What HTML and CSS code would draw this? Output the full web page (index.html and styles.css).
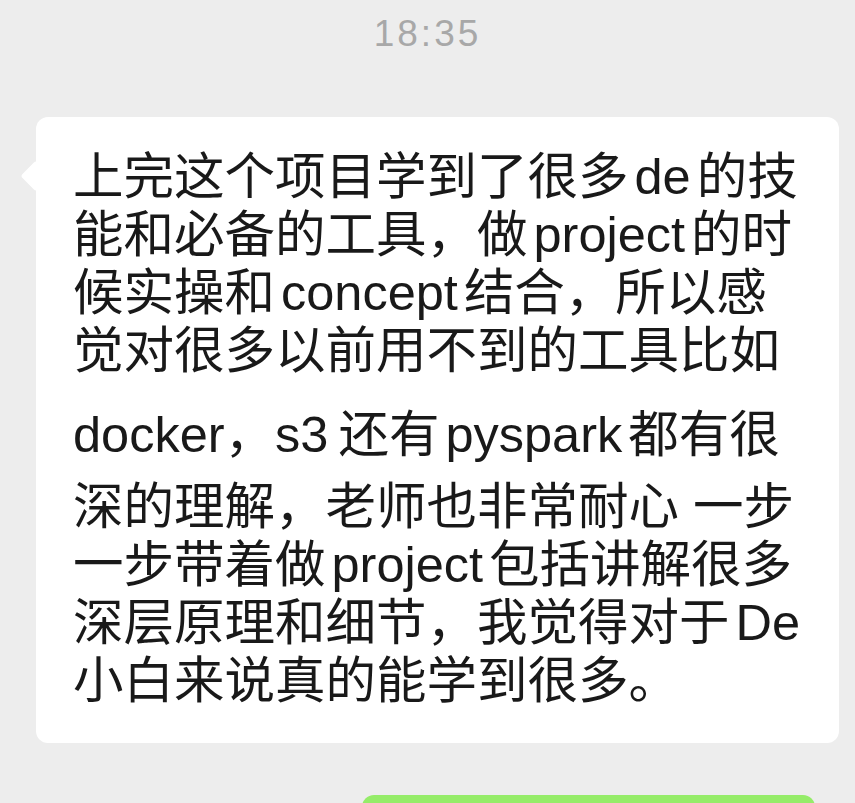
FILE: index.html
```html
<!DOCTYPE html>
<html lang="zh-CN">
<head>
<meta charset="utf-8">
<title>Chat</title>
<link rel="stylesheet" href="styles.css">
</head>
<body>
<div class="chat">
  <div class="time">18:35</div>
  <div class="msg-row">
    <div class="bubble">
      <div class="line">上完这个项目学到了很多<span class="lat">de</span>的技</div>
      <div class="line">能和必备的工具，做<span class="lat">project</span>的时</div>
      <div class="line">候实操和<span class="lat">concept</span>结合，所以感</div>
      <div class="line">觉对很多以前用不到的工具比如</div>
      <div class="line l5">docker，s3<span class="gap"></span>还有<span class="lat">pyspark</span>都有很</div>
      <div class="line l6">深的理解，老师也非常耐心 一步</div>
      <div class="line">一步带着做<span class="lat">project</span>包括讲解很多</div>
      <div class="line">深层原理和细节，我觉得对于<span class="lat last">De</span></div>
      <div class="line">小白来说真的能学到很多。</div>
    </div>
  </div>
  <div class="me-row">
    <div class="bubble-me"></div>
  </div>
</div>
</body>
</html>
```

FILE: styles.css
```css
* { box-sizing: border-box; }
html, body {
  margin: 0;
  padding: 0;
  background: #ededed;
  overflow: hidden;
}
body {
  width: 855px;
  height: 803px;
}
.chat {
  display: flex;
  flex-direction: column;
}
.time {
  padding-top: 14px;
  height: 54px;
  margin-bottom: 63px;
  font-family: "Liberation Sans", Arial, sans-serif;
  font-size: 37px;
  line-height: 40px;
  letter-spacing: 3px;
  color: #a8a8a8;
  text-align: center;
}
.msg-row {
  display: flex;
  padding-left: 36px;
}
.bubble {
  position: relative;
  width: 803px;
  height: 626px;
  background: #ffffff;
  border-radius: 12px;
  padding: 31px 20px 0 37px;
  font-family: "Liberation Sans", "Noto Sans CJK SC", sans-serif;
  font-size: 50.5px;
  color: #191919;
}
.bubble::before {
  content: "";
  position: absolute;
  left: -11px;
  top: 48px;
  width: 22px;
  height: 22px;
  background: #ffffff;
  transform: rotate(45deg);
  border-radius: 3px;
}
.line {
  height: 58px;
  line-height: 58px;
  white-space: nowrap;
}
.l5 { margin-top: 26px; }
.l6 { margin-top: 14px; }
.lat {
  margin: 0 6px;
}
.lat.last { margin-right: 0; }
.gap {
  display: inline-block;
  width: 10px;
}
.me-row {
  display: flex;
  padding-left: 362px;
  margin-top: 52px;
}
.bubble-me {
  width: 453px;
  height: 60px;
  background: #95ec69;
  border-radius: 12px;
}
```
